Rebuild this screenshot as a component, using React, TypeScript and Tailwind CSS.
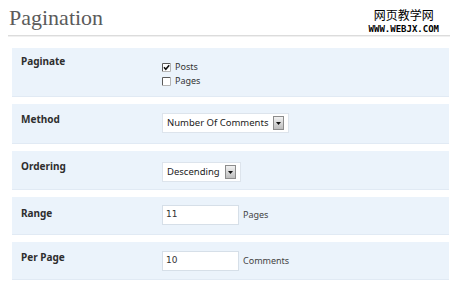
import React from "react";

const labelFont = { fontFamily: '"Noto Sans", "Open Sans", sans-serif' };

function Row({
  label,
  h,
  children,
  labelPt = "pt-[7px]",
}: {
  label: string;
  h: string;
  children: React.ReactNode;
  labelPt?: string;
}) {
  return (
    <div className={`flex bg-[#ebf3fb] border-b border-[#e1eaf4] ${h}`}>
      <div
        className={`w-[150px] shrink-0 pl-[9px] ${labelPt} text-[10px] leading-[14px] font-bold text-[#2e2e2e]`}
        style={labelFont}
      >
        {label}
      </div>
      <div className="flex-1">{children}</div>
    </div>
  );
}

function Check({ checked, text }: { checked?: boolean; text: string }) {
  return (
    <div className="flex items-center h-[14px] gap-[4px]">
      <svg width="9" height="9" viewBox="0 0 9 9" className="shrink-0">
        <rect x="0" y="0" width="9" height="9" fill="#ffffff" />
        <path d="M0.5 8.5 V0.5 H8.5" stroke="#5a5a5a" fill="none" />
        <path d="M8.5 0.5 V8.5 H0.5" stroke="#b4b4b4" fill="none" />
        {checked && (
          <path d="M2 4.2 L3.8 6.2 L7.2 2.2" stroke="#111" strokeWidth="1.6" fill="none" />
        )}
      </svg>
      <span className="text-[9px] text-[#333]" style={labelFont}>
        {text}
      </span>
    </div>
  );
}

function Select({ value, mt }: { value: string; mt: string }) {
  return (
    <div
      className={`${mt} inline-flex items-center h-[20px] bg-white border border-[#dde4ec] pl-[4px] pr-[4px] gap-[5px]`}
    >
      <span className="text-[9.5px] leading-[12px] text-[#222]" style={labelFont}>
        {value}
      </span>
      <span className="flex items-center justify-center w-[11px] h-[14px] border border-[#8c8c8c] bg-gradient-to-b from-[#f2f2f2] to-[#bdbdbd]">
        <svg width="5" height="3" viewBox="0 0 5 3">
          <path d="M0 0 H5 L2.5 3 Z" fill="#111" />
        </svg>
      </span>
    </div>
  );
}

function Field({ value, suffix, mt }: { value: string; suffix: string; mt: string }) {
  return (
    <div className={`${mt} flex items-center`}>
      <div
        className="w-[77px] h-[20px] bg-white border border-[#d6dfe8] pl-[3px] flex items-center text-[9px] text-[#333]"
        style={{ fontFamily: '"DejaVu Sans", sans-serif' }}
      >
        {value}
      </div>
      <span className="ml-[4px] text-[9px] text-[#444]" style={labelFont}>
        {suffix}
      </span>
    </div>
  );
}

export default function App() {
  return (
    <div className="w-[450px] h-[283px] bg-white overflow-hidden">
      <div className="flex justify-between h-[36px] ml-[8px] border-b border-[#dcdcdc] shadow-[0_1px_0_#f0f0f0]">
        <div
          className="pl-[1px] pt-[5px] text-[22px] leading-[26px] text-[#5b5b5b]"
          style={{ fontFamily: '"Liberation Serif", Georgia, serif' }}
        >
          Pagination
        </div>
        <div className="flex flex-col items-center pr-[11px]">
          <div
            className="mt-[9px] text-[12px] leading-[12px] text-black"
            style={{ fontFamily: '"Noto Sans CJK SC", sans-serif' }}
          >
            网页教学网
          </div>
          <div
            className="mt-[4px] text-[9px] leading-[9px] font-bold text-black"
            style={{ fontFamily: '"DejaVu Sans Mono", monospace' }}
          >
            WWW.WEBJX.COM
          </div>
        </div>
      </div>
      <div className="flex flex-col gap-[7px] ml-[12px] mr-[1px] mt-[12px]">
        <Row label="Paginate" h="h-[49px]" labelPt="pt-[6px]">
          <div className="mt-[12px] flex flex-col">
            <Check checked text="Posts" />
            <Check text="Pages" />
          </div>
        </Row>
        <Row label="Method" h="h-[40px]" labelPt="pt-[8px]">
          <Select value="Number Of Comments" mt="mt-[9px]" />
        </Row>
        <Row label="Ordering" h="h-[39px]" labelPt="pt-[8px]">
          <Select value="Descending" mt="mt-[11px]" />
        </Row>
        <Row label="Range" h="h-[38px]" labelPt="pt-[9px]">
          <Field value="11" suffix="Pages" mt="mt-[8px]" />
        </Row>
        <Row label="Per Page" h="h-[38px]" labelPt="pt-[8px]">
          <Field value="10" suffix="Comments" mt="mt-[9px]" />
        </Row>
      </div>
    </div>
  );
}
